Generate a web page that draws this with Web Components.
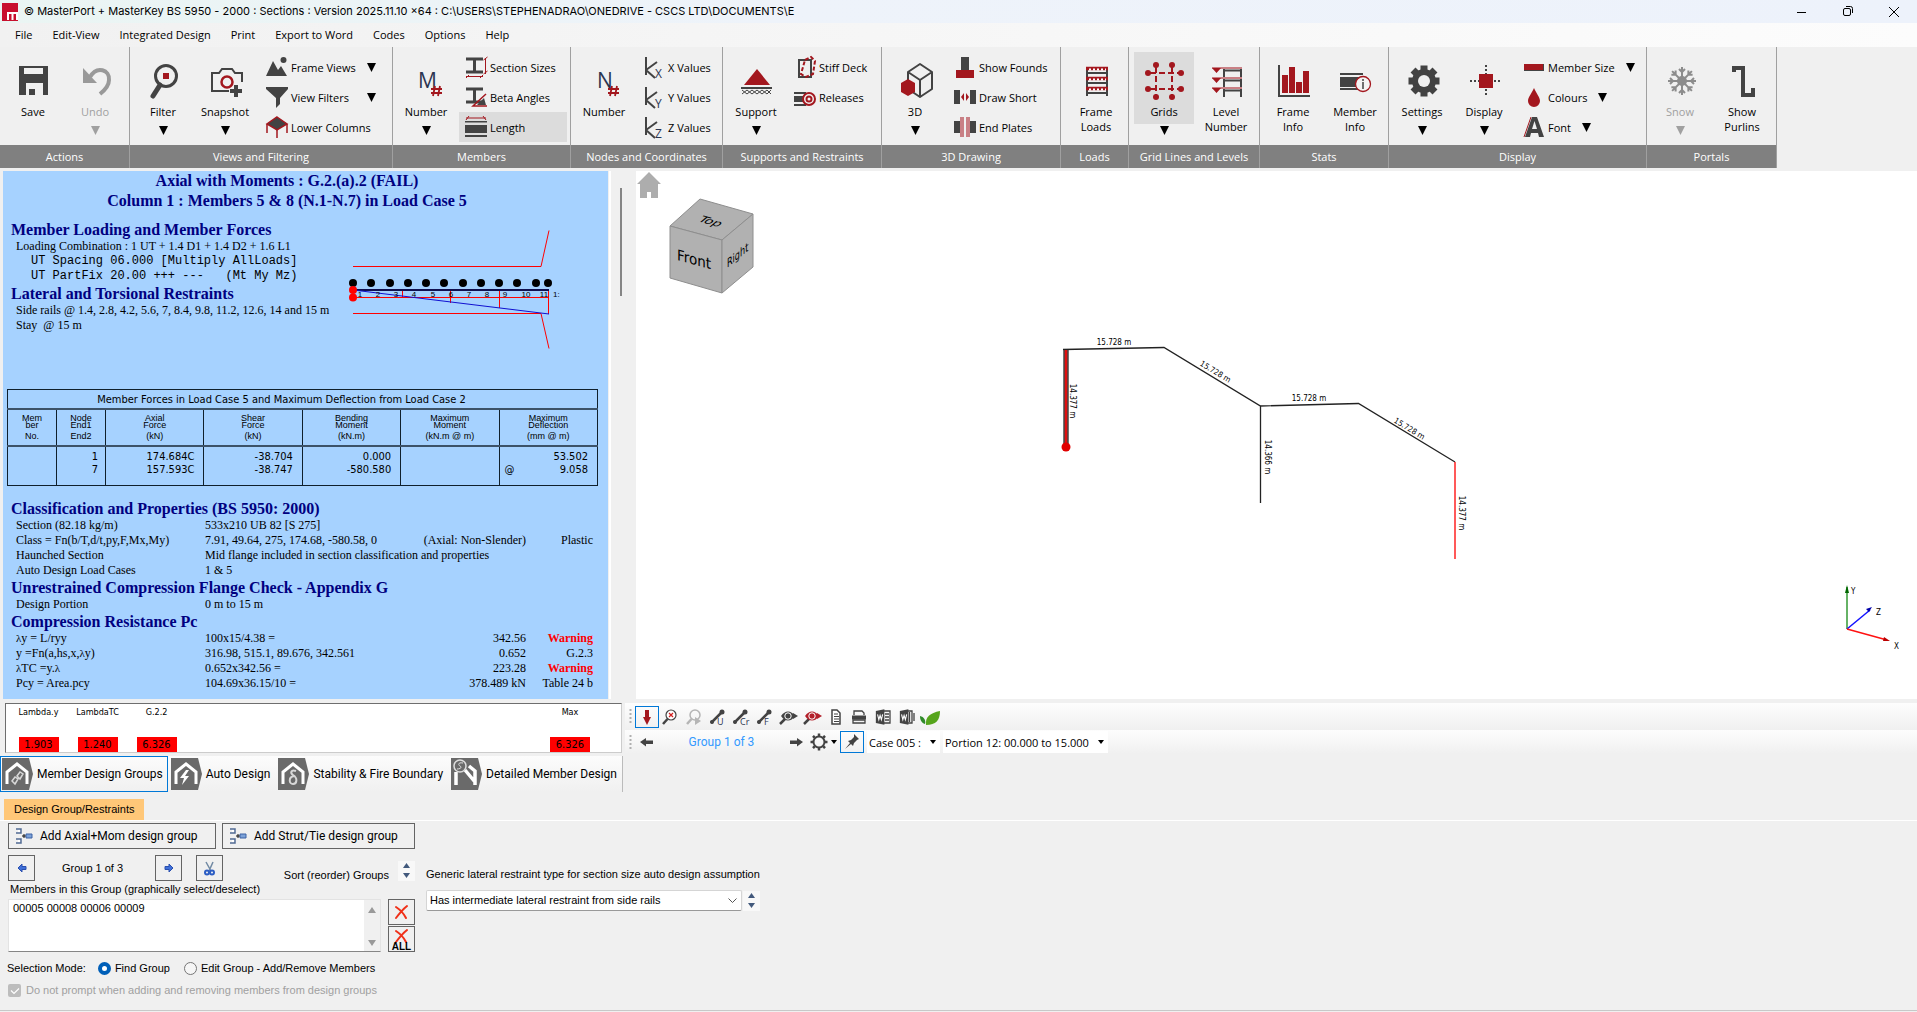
<!DOCTYPE html>
<html lang="en">
<head>
<meta charset="utf-8">
<title>MasterPort + MasterKey BS 5950</title>
<style>
  html, body { margin: 0; }
  body { font: 11px/15px "Open Sans", "Noto Sans", sans-serif; color: #000; background: #f0f0f0; }
</style>
</head>
<body>
<mk-app></mk-app>

<script>
const D = '#434343', R = '#a3171e', P = '#c98085';
const beam = `<path d="M1 1.500h17v3h-7v10h7v3H1v-3h7v-10H1z" fill="${D}"/>`;
const axis = l => `<path d="M4 1v18M4 14L15 6M4 14l9 8" stroke="${D}" stroke-width="2" fill="none"/><text x="13" y="22" font-size="12" fill="#2b3550">${l}</text>`;
const node = l => `<path d="M3 16L13 6" stroke="${D}" stroke-width="2.500"/><circle cx="14" cy="5" r="2.500" fill="${D}"/><circle cx="4" cy="15" r="2" fill="${D}"/><text x="9" y="18" font-size="9" fill="#2b3550">${l}</text>`;
const eye = c => `<path d="M7 12l-5 5" stroke="${D}" stroke-width="2.500"/><path d="M3 9c4-6 10-6 14 0-4 6-10 6-14 0z" fill="${c}"/><circle cx="10" cy="9" r="3.200" fill="none" stroke="#fff"/><path d="M15 6l5 3-5 3z" fill="${c}"/>`;
const house = x => `<path d="M0 0h27l4 16-4 16H0z" fill="#6a6a6a"/><path d="M5 26V14l10-8 10 8v12" fill="none" stroke="#fff" stroke-width="3"/>${x}`;
const member = `<path d="M3 2h4v4H3zM3 12h4v4H3z" fill="#fff"/><path d="M1 2h5v4H1M1 12h5v4H1" fill="none" stroke="#506a92" stroke-width="1.500"/><path d="M7 9h4M9 7v4" stroke="#111"/><path d="M11 7h6v4h-6z" fill="#7da2d8" stroke="#3c62a5"/>`;
const word = `<path d="M1 3l10-2v18L1 17z" fill="${D}"/><path d="M3 7l1.500 6L6 8l1.500 5L9 7" stroke="#fff" stroke-width="1.300" fill="none"/>`;
const cross = `<path d="M1 2C4 4 9 9 11 13M12 1C7 5 4 9 1 13" stroke="#f03018" stroke-width="2" fill="none" stroke-linecap="round"/>`;
const ICONS = {
  logo: [16, 18, `<path d="M0 0h16v18H0z" fill="#c8102e"/><path d="M6 17v-7h9v7M10.500 10v7" stroke="#fff" stroke-width="2" fill="none"/>`],
  minimise: [10, 10, `<path d="M0 5.500h9" stroke="#000"/>`],
  restore: [10, 11, `<rect x=".5" y="2.500" width="7" height="7" rx="1.500" fill="none" stroke="#000"/><path d="M3 .5h4.500q2 0 2 2V7" fill="none" stroke="#000"/>`],
  close: [10, 10, `<path d="M0 0l10 10M10 0L0 10" stroke="#000"/>`],
  down: [9, 9, `<path d="M0 0h9L4.500 9z" fill="currentColor"/>`],
  caret: [6, 4, `<path d="M0 0h6L3 4z" fill="#000"/>`],
  spinup: [7, 5, `<path d="M0 5h7L3.500 0z" fill="#42597c"/>`],
  spindown: [7, 5, `<path d="M0 0h7L3.500 5z" fill="#42597c"/>`],
  scrollup: [8, 6, `<path d="M0 6h8L4 0z" fill="#999"/>`],
  scrolldown: [8, 6, `<path d="M0 0h8L4 6z" fill="#999"/>`],
  chevron: [9, 6, `<path d="M.5 .5l4 4 4-4" fill="none" stroke="#555"/>`],
  save: [32, 32, `<path fill-rule="evenodd" d="M2 1h29v29H2zM7 3v6h19V3zM9 18v12h17V18z" fill="${D}"/><path d="M12 24h6v6h-6z" fill="${D}"/>`],
  undo: [32, 32, `<path d="M4 3v15h14z" fill="#999"/><path d="M11 12C18 0 31 5 30 15c0 6-4 10-9 14" stroke="#999" stroke-width="4" fill="none"/>`],
  filter: [32, 32, `<circle cx="19" cy="11" r="10.500" fill="none" stroke="${D}" stroke-width="3"/><path d="M13 20L6 31" stroke="${D}" stroke-width="5" stroke-linecap="round"/><path d="M16 8h6v6h-6z" fill="${R}"/>`],
  snapshot: [32, 32, `<path d="M20 26H3V8h7l3-4h10l3 4h7v9" fill="none" stroke="${D}" stroke-width="2"/><circle cx="18" cy="17" r="5.500" fill="none" stroke="${R}" stroke-width="2.500"/><path d="M27 20v12M21 26h12" stroke="${D}" stroke-width="4"/>`],
  views: [22, 22, `<path d="M0 20L7 5l5 9 3-4 6 10z" fill="${D}"/><circle cx="17.500" cy="4" r="3" fill="${D}"/>`],
  funnel: [22, 22, `<path d="M0 1h22v2l-8 9v6l-4 4V12L0 3z" fill="${D}"/>`],
  lower: [22, 22, `<path d="M11 1l10 7-10 6L1 8z" fill="${D}" stroke="${R}" stroke-width="1.500"/><path d="M1 8v9M21 8v9M11 14v8" stroke="${R}" stroke-width="1.500"/>`],
  mnum: [32, 32, `<text x="8" y="23" font-size="21" fill="#2b3550">M</text><path d="M24 21l-2 10M29 21l-2 10M20 24h11M20 28h11" transform="translate(1 0)" stroke="${R}" stroke-width="1.800"/>`],
  nnum: [32, 32, `<text x="9" y="23" font-size="21" fill="#2b3550">N</text><path d="M24 21l-2 10M29 21l-2 10M20 24h11M20 28h11" stroke="${R}" stroke-width="1.800"/>`],
  section: [22, 22, beam + `<path d="M20.500 2v16M18.500 4l4-3M18.500 18l4-3M1 20.500h17M1 22l3-3M15 22l3-3" stroke="${R}"/>`],
  beta: [22, 22, beam + `<path d="M12 19h9l-2-7z" fill="${D}"/><path d="M21 8L8 20h14" stroke="${R}" fill="none" stroke-width="1.500"/>`],
  length: [22, 22, `<path d="M0 5h22v1.500H0zM0 9h22v8H0zM0 19h22v2H0z" fill="${D}"/><path d="M1 2h20M1 4l3-4M18 0l3 4" stroke="${R}"/>`],
  axx: [23, 22, axis('X')], axy: [23, 22, axis('Y')], axz: [23, 22, axis('Z')],
  support: [32, 32, `<path d="M17 4l13 16H4z" fill="${R}"/><path d="M1 22h31v2H1z" fill="${D}"/><path d="M2 25l5 4 5-4 5 4 5-4 5 4 4-4M2 29l5-4 5 4 5-4 5 4 5-4 4 4" fill="none" stroke="${D}"/>`],
  deck: [22, 22, `<rect x="5" y="4" width="12" height="17" fill="none" stroke="${D}" stroke-width="2"/><path d="M11 4l6-3 4 4-2 13-7 3-5-3z" fill="none" stroke="${R}" stroke-width="2" stroke-dasharray="4 2"/>`],
  release: [22, 22, `<path d="M0 6h12v2H0zM0 10h12v6H0zM0 18h12v2H0z" fill="${D}"/><circle cx="15" cy="13" r="6" fill="#f0f0f0" stroke="${R}" stroke-width="2"/><circle cx="15" cy="13" r="2.500" fill="none" stroke="${R}" stroke-width="2"/>`],
  cube3d: [32, 32, `<path d="M21-1l12 8v17L21 32 9 24V7zM9 7l12 8 12-8M21 15v16" fill="none" stroke="${D}" stroke-width="2" stroke-linejoin="round"/><path d="M9 14l7 4v9l-7 4-7-4v-9z" fill="${R}"/>`],
  founds: [22, 22, `<path d="M7 1h8v13H7z" fill="${D}"/><path d="M2 14h18v8H2z" fill="${R}"/>`],
  short: [22, 22, `<path d="M0 4h6v14H0zM16 4h6v14h-6z" fill="${D}"/><path d="M7 11l3-4v8zM15 11l-3-4v8z" fill="${R}"/>`],
  plates: [22, 22, `<path d="M0 5h7v12H0zM15 5h7v12h-7z" fill="${D}"/><path d="M6 1h4v20H6zM12 1h4v20h-4z" fill="${P}"/>`],
  floads: [32, 32, `<path d="M7 5v26M27 5v26M7 8h20M7 18h20M7 28h20" stroke="${D}" stroke-width="2"/><path d="M6 3.500h22M6 13.500h22M6 23.500h22" stroke="${R}" stroke-width="3.500"/><path d="M9 4.500h17M9 14.500h17M9 24.500h17" stroke="#fff" stroke-width="2" stroke-dasharray="2 2"/>`],
  grids: [32, 32, `<g fill="${R}"><circle cx="8" cy="0" r="3"/><circle cx="24" cy="0" r="3"/><circle cx="8" cy="32" r="3"/><circle cx="24" cy="32" r="3"/><circle cx="0" cy="8" r="3"/><circle cx="33" cy="8" r="3"/><circle cx="0" cy="24" r="3"/><circle cx="33" cy="24" r="3"/></g><path d="M8 0v32M24 0v32M0 8h33M0 24h33" stroke="${R}" stroke-width="2" stroke-dasharray="6 3" stroke-dashoffset="-2"/>`],
  level: [32, 32, `<path d="M14 4v28M31 4v28M14 5.500h17M14 15.500h17M14 25.500h17" stroke="${D}" stroke-width="2"/><path d="M2 3h30M2 13h30M2 23h30" stroke="${P}" stroke-width="2"/><path d="M2 3h9L6.500 8zM2 13h9l-4.500 5zM2 23h9l-4.500 5z" fill="${R}"/>`],
  finfo: [32, 32, `<path d="M2 0v31h31" fill="none" stroke="${D}" stroke-width="2"/><path d="M5 10h6v18H5zM12 2h6v26h-6zM19 17h6v11h-6zM26 6h6v22h-6z" fill="${R}"/>`],
  minfo: [32, 32, `<path d="M1 8h23v2H1zM1 12h19v10H1zM1 23h18v2H1z" fill="${D}"/><circle cx="24" cy="19" r="7.500" fill="#f4f4f4" stroke="${R}" stroke-width="1.300"/><path d="M24 17v7M24 14v2" stroke="${D}" stroke-width="1.500"/>`],
  gear: [32, 32, `<g transform="translate(18 16)"><g fill="${D}"><circle r="12"/>${[0,45,90,135].map(a => `<path d="M-3.500-15.500h7v31h-7z" transform="rotate(${a})"/>`).join('')}</g><circle r="6" fill="#f0f0f0"/></g>`],
  display: [32, 32, `<path d="M18 0v32M2 16h32" stroke="${D}" stroke-width="2" stroke-dasharray="2 2"/><path d="M11 9h14v14H11z" fill="${R}"/>`],
  msize: [22, 22, `<path d="M1 8h20v7H1z" fill="${D}"/><path d="M1 8h19v6H1z" fill="${R}"/>`],
  drop: [22, 22, `<path d="M11 2c2 5 6 9 6 13a6 6 0 0 1-12 0c0-4 4-8 6-13z" fill="${R}"/>`],
  font: [22, 22, `<path d="M1 21L8 1" stroke="${R}"/><path fill-rule="evenodd" d="M2 21L9 1h5l7 20h-5l-1-4H8l-1 4zM9 13h5l-2.500-8z" fill="${D}"/>`],
  snow: [32, 32, `<g transform="translate(18 16)" stroke="#8c8c8c" stroke-width="2" fill="none">${[0,45,90,135,180,225,270,315].map(a => `<path d="M0 0v-14M-3-12l3 3 3-3" transform="rotate(${a})"/>`).join('')}<circle r="4" fill="#8c8c8c"/></g>`],
  purlin: [32, 32, `<path d="M8 7V3h9v27h10v-7" fill="none" stroke="${D}" stroke-width="4"/>`],
  home: [24, 26, `<path d="M12 0l12 12h-3v14h-7v-6h-4v6H3V12H0z" fill="#adadad"/>`],
  tdown: [20, 20, `<path d="M8 3h4v7h2l-4 8-4-8h2z" fill="${R}"/>`],
  zoomx: [20, 20, `<circle cx="11" cy="8" r="5" fill="#fff" stroke="${D}" stroke-width="1.200"/><path d="M7.500 12L3 17" stroke="${D}" stroke-width="2.500"/><path d="M9 6l4 4M13 6l-4 4" stroke="#d02020" stroke-width="1.200"/>`],
  zoomp: [20, 20, `<circle cx="11" cy="8" r="5" fill="none" stroke="#b5b5b5" stroke-width="1.500"/><path d="M7.500 12L3 17" stroke="#b5b5b5" stroke-width="2.500"/><path d="M11 10l6 4-6 4z" fill="#b5b5b5"/>`],
  nodeu: [20, 20, node('U')], nodeg: [20, 20, node('Cr')], nodef: [20, 20, node('F')],
  eyed: [20, 20, eye(D)], eyer: [20, 20, eye('#b3202a')],
  doc: [20, 20, `<path d="M6 3h5l3 3v11H6z" fill="#fff" stroke="${D}" stroke-width="1.500"/><path d="M8 7h4M8 9.500h5M8 12h5M8 14.500h5" stroke="${D}"/>`],
  print: [20, 20, `<path d="M5 8V4h8l2 2v2M4 16h12v-3H4z" fill="none" stroke="${D}" stroke-width="1.300"/><path d="M3 8.500h14v4H3z" fill="${D}"/>`],
  word1: [20, 20, `<path d="M11 4h6v12h-6M12 7h4M12 10h4M12 13h4" fill="none" stroke="${D}" stroke-width="1.300"/><g transform="translate(2 1.500) scale(.85)">${word}</g>`],
  word2: [20, 20, `<path d="M11 4h4v12h-4M12.500 5v10M17 6v8" fill="none" stroke="${D}" stroke-width="1.300"/><g transform="translate(2 1.500) scale(.85)">${word}</g>`],
  leaf: [20, 20, `<path d="M6 18C5 10 10 6 20 4c0 9-4 14-14 14z" fill="#56a51c"/><path d="M5 17C1 16 0 12 0 9c4 1 6 4 5 8z" fill="#2f8a2a"/>`],
  back: [20, 20, `<path d="M3 10l6-4v2.500h7v3.500H9v2.500z" fill="${D}"/>`],
  fwd: [20, 20, `<path d="M17 10l-6-4v2.500H4v3.500h7v2.500z" fill="${D}"/>`],
  cog: [20, 20, `<g transform="translate(10 10)"><circle r="5.500" fill="none" stroke="${D}" stroke-width="2"/>${[0,45,90,135,180,225,270,315].map(a => `<path d="M0-6v-2.500" stroke="${D}" stroke-width="2.500" transform="rotate(${a})"/>`).join('')}</g>`],
  pin: [20, 20, `<path d="M12 2l5 5-2 1-3 3-1 3-2-2-6 5 5-6-2-2 3-1 3-3z" fill="${D}"/>`],
  grip: [3, 15, `<path d="M1.500 0v15" stroke="#b0b0b0" stroke-width="2" stroke-dasharray="2 2"/>`],
  hlink: [32, 32, house(`<path d="M10 23l3-4 3 2-3 5zM15 18l3-4 3 2-3 5z" fill="none" stroke="#d8d8d8" stroke-width="1.500"/>`)],
  hbolt: [32, 32, house(`<path d="M15 12l-6 8h4l-2 7 7-9h-4l4-6z" fill="#fff"/>`)],
  hdelta: [32, 32, house(`<path d="M18 13c-5-2-6 2-3 4 5 3 4 9 0 9s-5-7 1-8" fill="none" stroke="#d8d8d8" stroke-width="2"/>`)],
  hzoom: [32, 32, `<path d="M0 0h27l4 16-4 16H0z" fill="#6a6a6a"/><path d="M5 27V14M24 27V13l-6-5M14 12l10 12" fill="none" stroke="#fff" stroke-width="3.500"/><circle cx="9" cy="8" r="6" fill="#6a6a6a" stroke="#ddd" stroke-width="1.500"/><path d="M12 5c-5-1-5 2-3 3s1 3-3 3" fill="none" stroke="#ddd"/>`],
  addg: [18, 18, member],
  bleft: [10, 10, `<path d="M1 5l4-4v2.500h4v3H5V9z" fill="#3f6fd8" stroke="#2a4fae"/>`],
  bright: [10, 10, `<path d="M9 5L5 1v2.500H1v3h4V9z" fill="#3f6fd8" stroke="#2a4fae"/>`],
  cut: [11, 15, `<path d="M2 1l5 9M9 1L5 10" stroke="#7089a3" stroke-width="1.500"/><circle cx="3" cy="11.500" r="2" fill="none" stroke="#2d5ec4" stroke-width="2"/><circle cx="8" cy="11.500" r="2" fill="none" stroke="#2d5ec4" stroke-width="2"/>`],
  del: [13, 14, cross]
};

const define = (name, render) => customElements.define(name, class extends HTMLElement {
  connectedCallback() {
    if (this.shadowRoot) return;
    this.attachShadow({ mode: 'open' }).innerHTML = render(this);
  }
});
const at = (el, n) => el.getAttribute(n) || '';

define('mk-icon', el => {
  const [w, h, body] = ICONS[at(el, 'name')];
  return `<style>:host{display:block;flex:none;width:${w}px;height:${h}px}svg{display:block;overflow:visible}</style>
  <svg width="${w}" height="${h}" viewBox="0 0 ${w} ${h}" aria-hidden="true">${body}</svg>`;
});

define('title-bar', () => `<style>
  :host{display:flex;align-items:center;height:23px;padding-left:2px;background:linear-gradient(90deg,#eaf5f3,#eef3fa 40%,#edf2fb)}
  span{font:11px/15px Inter,sans-serif;margin-left:6px;flex:1;white-space:nowrap}
  button{all:unset;width:46px;height:20px;display:flex;align-items:center;justify-content:center}
  </style><mk-icon name="logo"></mk-icon>
  <span>© MasterPort + MasterKey BS 5950 - 2000 : Sections : Version 2025.11.10 x64 : C:\\USERS\\STEPHENADRAO\\ONEDRIVE - CSCS LTD\\DOCUMENTS\\E</span>
  <button aria-label="Minimise"><mk-icon name="minimise"></mk-icon></button><button aria-label="Restore"><mk-icon name="restore"></mk-icon></button><button aria-label="Close"><mk-icon name="close"></mk-icon></button>`);

define('menu-bar', () => `<style>
  :host{display:flex;align-items:center;gap:20px;box-sizing:border-box;height:24px;padding:0 0 2px 15px;background:linear-gradient(90deg,#f1f1f1,#fcfcfc)}
  button{all:unset;white-space:nowrap}
  </style>${['File','Edit-View','Integrated Design','Print','Export to Word','Codes','Options','Help'].map(t => `<button>${t}</button>`).join('')}`);

define('ribbon-group', el => `<style>
  :host{display:flex;flex-direction:column;flex:none;box-sizing:border-box;border-right:1px solid #a0a0a0;height:121px}
  .body{display:flex;flex:1;padding-left:var(--inset,2px)}
  footer{height:23px;line-height:23px;background:#808080;color:#fff;text-align:center}
  </style><div class="body"><slot></slot></div><footer>${at(el, 'caption')}</footer>`);

define('ribbon-button', el => `<style>
  :host{display:flex;flex-direction:column;align-items:center;width:62px;padding-top:5px;color:${el.hasAttribute('off') ? '#a0a0a0' : '#000'}}
  button{all:unset;box-sizing:border-box;display:flex;flex-direction:column;align-items:center;width:60px;min-height:72px;padding-top:13px;text-align:center;${el.hasAttribute('on') ? 'background:#dcdcdc' : ''}}
  span{margin-top:7px}
  .arrow{margin-top:2px}
  </style><button><mk-icon name="${at(el, 'icon')}"></mk-icon><span>${at(el, 'label').replace('|', '<br>')}</span></button>
  ${el.hasAttribute('menu') ? '<mk-icon class="arrow" name="down"></mk-icon>' : ''}`);

define('ribbon-item', el => `<style>
  :host{display:block}
  button{all:unset;box-sizing:border-box;display:flex;align-items:center;gap:3px;width:100%;height:30px;min-width:108px;padding:0 6px;white-space:nowrap;${el.hasAttribute('on') ? 'background:#dcdcdc' : ''}}
  .arrow{margin-left:var(--arrow,8px)}
  </style><button><mk-icon name="${at(el, 'icon')}"></mk-icon><span>${at(el, 'label')}</span>${el.hasAttribute('menu') ? '<mk-icon class="arrow" name="down"></mk-icon>' : ''}</button>`);

define('ribbon-list', () => `<style>:host{display:flex;flex-direction:column;padding-top:5px;margin-left:2px}:host([even]){--arrow:auto;width:122px;margin-left:4px}</style><slot></slot>`);

define('ribbon-bar', () => {
  const big = (icon, label, extra = '') => `<ribbon-button icon="${icon}" label="${label}" ${extra}></ribbon-button>`;
  const list = (rows, attr = '') => `<ribbon-list ${attr}>${rows.map(([i, l, x = '']) => `<ribbon-item icon="${i}" label="${l}" ${x}></ribbon-item>`).join('')}</ribbon-list>`;
  const group = (caption, w, body, inset = 2) => `<ribbon-group caption="${caption}" style="width:${w}px;--inset:${inset}px">${body}</ribbon-group>`;
  return `<style>:host{display:flex;height:121px}</style>` +
    group('Actions', 130, big('save', 'Save') + big('undo', 'Undo', 'menu off')) +
    group('Views and Filtering', 263, big('filter', 'Filter', 'menu') + big('snapshot', 'Snapshot', 'menu') + list([['views', 'Frame Views', 'menu'], ['funnel', 'View Filters', 'menu'], ['lower', 'Lower Columns']], 'even')) +
    group('Members', 178, big('mnum', 'Number', 'menu') + list([['section', 'Section Sizes'], ['beta', 'Beta Angles'], ['length', 'Length', 'on']])) +
    group('Nodes and Coordinates', 152, big('nnum', 'Number') + list([['axx', 'X Values'], ['axy', 'Y Values'], ['axz', 'Z Values']]), 3) +
    group('Supports and Restraints', 159, big('support', 'Support', 'menu') + list([['deck', 'Stiff Deck'], ['release', 'Releases']]), 3) +
    group('3D Drawing', 179, big('cube3d', '3D', 'menu') + list([['founds', 'Show Founds'], ['short', 'Draw Short'], ['plates', 'End Plates']])) +
    group('Loads', 68, big('floads', 'Frame|Loads'), 4) +
    group('Grid Lines and Levels', 131, big('grids', 'Grids', 'on menu') + big('level', 'Level|Number'), 4) +
    group('Stats', 129, big('finfo', 'Frame|Info') + big('minfo', 'Member|Info')) +
    group('Display', 258, big('gear', 'Settings', 'menu') + big('display', 'Display', 'menu') + list([['msize', 'Member Size', 'menu'], ['drop', 'Colours', 'menu'], ['font', 'Font', 'menu']])) +
    group('Portals', 130, big('snow', 'Snow', 'off menu') + big('purlin', 'Show|Purlins'));
});

define('moment-figure', () => {
  const dots = [353, 371, 390, 408, 426, 444, 463, 481, 499, 517, 536, 548].map(x => `<circle cx="${x}" cy="283" r="4"/>`).join('');
  const nums = [360, 378, 396, 414, 433, 451, 469, 487, 505, 526, 544].map((x, i) => `<text x="${x}" y="297" text-anchor="middle">${i + 1}</text>`).join('');
  return `<style>:host{display:block}svg{display:block;overflow:visible;font:8px "Liberation Sans",sans-serif}</style>
  <svg width="215" height="130" viewBox="345 225 215 130">
  <g fill="none" stroke="#f00"><path d="M353 266.500h188l8-36M353 313.500h188l8 35M353 297.500h196M402.500 290v8M450.500 290v13M499.500 290v18M548.500 290v24"/></g>
  ${dots}<path d="M353 290h196" stroke="#101050" stroke-width="2"/><path d="M353 290l196 24" stroke="#1010d0" fill="none"/>
  ${nums}<text x="553" y="297">1:</text><circle cx="353" cy="290" r="4" fill="#f00"/><circle cx="353" cy="297.500" r="4" fill="#f00"/></svg>`;
});

define('forces-table', () => {
  const head = [['Mem', 'ber', 'No.'], ['Node', 'End1', 'End2'], ['Axial', 'Force', '(kN)'], ['Shear', 'Force', '(kN)'], ['Bending', 'Moment', '(kN.m)'], ['Maximum', 'Moment', '(kN.m @ m)'], ['Maximum', 'Deflection', '(mm @ m)']];
  return `<style>
  :host{display:block}
  table{border-collapse:collapse;table-layout:fixed;width:100%;border:1px solid #10202c;font:11px/13px "DejaVu Sans Condensed",sans-serif}
  th,td{padding:0;font-weight:400;border:1px solid #10202c}
  .t{height:18px;border-bottom:2px solid #3c5268;padding-right:42px}
  .h th{height:35px;font:9px/7px "Liberation Sans",sans-serif;border-bottom:2px solid #3c5268}
  .h i{display:block;font-style:normal;margin-top:4px}
  td{height:33px;padding:3px 9px 2px 5px;text-align:right;vertical-align:top}
  td.n{padding-right:7px}
  td div{display:flex;justify-content:space-between}
  </style><table><colgroup><col style="width:49px"><col style="width:49px"><col><col><col><col><col></colgroup>
  <tr><th class="t" colspan="7">Member Forces in Load Case 5 and Maximum Deflection from Load Case 2</th></tr>
  <tr class="h">${head.map(h => `<th>${h[0]}<br>${h[1]}<i>${h[2]}</i></th>`).join('')}</tr>
  <tr><td></td><td class="n">1<br>7</td><td>174.684C<br>157.593C</td><td>-38.704<br>-38.747</td><td>0.000<br>-580.580</td><td></td><td>53.502<div><span>@</span><span>9.058</span></div></td></tr></table>`;
});

define('design-report', () => {
  const row = (a, b = '', c = '', d = '', w = '') => `<div class="row"><span>${a}</span><span>${b}</span><span class="v">${c}</span><span class="v ${w}">${d}</span></div>`;
  return `<style>
  :host{display:flex;flex-direction:column;box-sizing:border-box;background:#a6d2ff;color:#000;font:12px/15px "Liberation Serif",serif;padding:0 10px 8px 4px;white-space:nowrap}
  h1,h2{font-weight:700;font-size:16px;color:#000080;margin:0}
  h1{line-height:20px;text-align:center;padding-right:31px}
  h2{line-height:19px;padding-left:4px}
  p{margin:0;padding-left:9px}
  pre{margin:0;font:12px/15px "Liberation Mono",monospace;padding-left:24px}
  .top{display:flex;justify-content:space-between;align-items:flex-start;padding:9px 38px 0 0;height:169px}
  .top moment-figure{padding-top:5px}
  .row{display:grid;grid-template-columns:189px 1fr auto 67px;padding:0 5px 0 9px}
  .v{text-align:right}.warn{color:#f00;font-weight:700}
  forces-table{margin-bottom:13px}
  small{font-size:11px}
  </style>
  <h1>Axial with Moments : G.2.(a).2 (FAIL)</h1><h1>Column 1 : Members 5 &amp; 8 (N.1-N.7) in Load Case 5</h1>
  <div class="top"><div><h2>Member Loading and Member Forces</h2>
  <p>Loading Combination : 1 UT + 1.4 D1 + 1.4 D2 + 1.6 L1</p>
  <pre>UT Spacing 06.000 [Multiply AllLoads]
UT PartFix 20.00 +++ ---   (Mt My Mz)</pre>
  <h2>Lateral and Torsional Restraints</h2><p>Side rails @ 1.4, 2.8, 4.2, 5.6, 7, 8.4, 9.8, 11.2, 12.6, 14 and 15 m</p><p>Stay &nbsp;@ 15 m</p></div>
  <moment-figure></moment-figure></div>
  <forces-table></forces-table>
  <h2>Classification and Properties (BS 5950: 2000)</h2>` +
  row('Section (82.18 kg/m)', '533x210 UB 82 [S 275]') +
  row('Class = Fn(b/T,d/t,py,F,Mx,My)', '7.91, 49.64, 275, 174.68, -580.58, 0', '(Axial: Non-Slender)', 'Plastic') +
  row('Haunched Section', 'Mid flange included in section classification and properties') +
  row('Auto Design Load Cases', '1 &amp; 5') +
  `<h2>Unrestrained Compression Flange Check - Appendix G</h2>` + row('Design Portion', '0 m to 15 m') +
  `<h2>Compression Resistance Pc</h2>` +
  row('<small>λ</small>y = L/ryy', '100x15/4.38 =', '342.56', 'Warning', 'warn') +
  row('y =Fn(a,hs,x,<small>λ</small>y)', '316.98, 515.1, 89.676, 342.561', '0.652', 'G.2.3') +
  row('<small>λ</small>TC =y.<small>λ</small>', '0.652x342.56 =', '223.28', 'Warning', 'warn') +
  row('Pcy = Area.pcy', '104.69x36.15/10 =', '378.489 kN', 'Table 24 b');
});

define('frame-viewport', () => `<style>
  :host{display:block;position:relative;background:#fff;overflow:hidden}
  mk-icon{position:absolute;left:1px;top:1px}
  svg{position:absolute;overflow:visible;font-family:"DejaVu Sans Condensed",sans-serif}
  .cube{left:33px;top:27px}.frame{left:420px;top:160px}.axes{right:14px;bottom:44px}
  </style>
  <mk-icon name="home"></mk-icon>
  <svg class="cube" width="86" height="96" viewBox="669 198 86 96"><g fill="#b1b1b1" stroke="#8e8e8e" stroke-linejoin="round"><path d="M670 226l30-27 53 15-31 26z"/><path d="M670 226l52 14v53l-52-15z"/><path d="M722 240l31-26v53l-31 26z"/></g>
  <text transform="matrix(.96 .27 -.6 .5 697 221)" font-size="15">Top</text>
  <text transform="matrix(1 .27 0 1 677 260)" font-size="15">Front</text>
  <text transform="matrix(.75 -.62 0 1 727 268)" font-size="12">Right</text></svg>
  <svg class="frame" width="420" height="240" viewBox="1056 331 420 240" font-size="8">
  <path d="M1063 349.500L1164 347.500L1260.500 406l98-2.500L1455 462M1260.500 406v97" fill="none" stroke="#222" stroke-width="1.300"/>
  <path d="M1455 462v97" stroke="#f22" stroke-width="1.500"/>
  <path d="M1068.500 384h7v34h-7z" fill="#fff"/>
  <path d="M1066 350v94" stroke="#444" stroke-width="5.500"/><path d="M1066 350v94" stroke="#e01010" stroke-width="2.500"/>
  <circle cx="1066" cy="447" r="4.500" fill="#e00000"/>
  <g text-anchor="middle"><text x="1114" y="345">15.728 m</text><text x="1309" y="401">15.728 m</text>
  <text transform="translate(1214 374) rotate(31)">15.728 m</text><text transform="translate(1408 431) rotate(31)">15.728 m</text>
  <text transform="translate(1070 401) rotate(90)">14.377 m</text><text transform="translate(1265 457) rotate(90)">14.366 m</text><text transform="translate(1459 513) rotate(90)">14.377 m</text></g></svg>
  <svg class="axes" width="56" height="70" viewBox="1847 586 56 70" font-size="8">
  <path d="M1847 630v-42" stroke="#393" stroke-width="1.500"/><path d="M1847 586l2 8h-4z" fill="#060"/>
  <path d="M1847 630l23-19" stroke="#11f" stroke-width="1.500"/><path d="M1872 608l-3 5-3-3z" fill="#00a"/>
  <path d="M1847 630l40 11" stroke="#f11" stroke-width="1.500"/><path d="M1890 642l-7 0 1-4z" fill="#b00"/>
  <text x="1851" y="595">Y</text><text x="1876" y="616">Z</text><text x="1894" y="650">X</text></svg>`);

define('summary-box', () => `<style>
  :host{display:flex;box-sizing:border-box;height:50px;margin:0 3px 0 5px;padding:1px 31px 0 3px;background:#fff;border:1px solid #6e6e6e;border-right-color:#ccc;border-bottom-color:#ccc;font:9px/12px "DejaVu Sans Condensed",sans-serif}
  div{width:59px;display:flex;flex-direction:column;align-items:center;justify-content:space-between}
  div:last-child{margin-left:auto;width:40px}
  b{font-weight:400;width:40px;background:#f00;text-align:center;font-size:11px;line-height:15px}
  span{padding-top:1px}
  </style>${[['Lambda.y', '1.903'], ['LambdaTC', '1.240'], ['G.2.2', '6.326'], ['Max', '6.326']].map(([a, b]) => `<div><span>${a}</span><b>${b}</b></div>`).join('')}`);

define('design-tabs', () => `<style>
  :host{display:flex;height:36px;margin-right:2px;background:linear-gradient(#fcfcfc,#f0f0f0);border-right:1px solid #bbb}
  button{all:unset;box-sizing:border-box;display:flex;align-items:center;gap:3px;height:36px;padding:0 4px 0 1px;border:1px solid transparent;white-space:nowrap}
  button:nth-of-type(n+2){margin-left:1px}
  .on{border-color:#0078d7}
  button span{font:12px/15px Roboto,sans-serif}
  </style>${[['hlink', 'Member Design Groups'], ['hbolt', 'Auto Design'], ['hdelta', 'Stability &amp; Fire Boundary'], ['hzoom', 'Detailed Member Design']].map(([i, t], n) => `<button class="${n ? '' : 'on'}"><mk-icon name="${i}"></mk-icon><span>${t}</span></button>`).join('')}`);

define('view-toolbars', () => `<style>
  :host{display:block}
  .bar{display:flex;align-items:center;height:27px;padding-left:4px;background:linear-gradient(#fdfdfd,#f0f0f0)}
  .bar+.bar{height:24px}
  mk-icon[name=grip]{margin-right:3px}
  button{all:unset;box-sizing:border-box;display:flex;align-items:center;justify-content:center;width:24px;height:22px;border:1px solid transparent}
  button.on{border-color:#0078d7}
  button.opt{width:22px}
  .arrow{margin:0 3px 0 1px}
  .tools{display:flex;width:307px}
  .tools button{flex:1}
  .grp{width:125px;text-align:center;color:#3399ff;font:12px/15px Roboto,sans-serif}
  .pick{display:grid;align-items:center;justify-items:end;background:#fff;height:22px;margin-left:3px}
  .pick>*{grid-area:1/1}
  .pick mk-icon{margin-right:4px;pointer-events:none}
  select{appearance:none;border:0;background:none;width:100%;height:22px;padding:0 18px 0 2px;font:inherit;color:#000}
  </style>
  <div class="bar"><mk-icon name="grip"></mk-icon><div class="tools">${['tdown', 'zoomx', 'zoomp', 'nodeu', 'nodeg', 'nodef', 'eyed', 'eyer', 'doc', 'print', 'word1', 'word2', 'leaf'].map((n, i) => `<button aria-label="${n}" class="${i ? '' : 'on'}"><mk-icon name="${n}"></mk-icon></button>`).join('')}</div></div>
  <div class="bar"><mk-icon name="grip"></mk-icon><button aria-label="Previous group"><mk-icon name="back"></mk-icon></button><span class="grp">Group 1 of 3</span><button aria-label="Next group"><mk-icon name="fwd"></mk-icon></button><button class="opt" aria-label="Options"><mk-icon name="cog"></mk-icon></button><mk-icon name="caret" class="arrow"></mk-icon><button class="on" aria-label="Pin"><mk-icon name="pin"></mk-icon></button>
  <div class="pick" style="width:73px"><select aria-label="Load case"><option>Case 005 :</option></select><mk-icon name="caret"></mk-icon></div>
  <div class="pick" style="width:165px"><select aria-label="Portion"><option>Portion 12: 00.000 to 15.000</option></select><mk-icon name="caret"></mk-icon></div></div>`);

define('spin-box', () => `<style>:host{display:flex;flex-direction:column;width:17px}
  button{all:unset;display:flex;justify-content:center;align-items:center;height:10px;background:#f8f8f8}</style>
  <button aria-label="Up"><mk-icon name="spinup"></mk-icon></button><button aria-label="Down"><mk-icon name="spindown"></mk-icon></button>`);

define('group-panel', () => `<style>
  :host{display:flex;flex-direction:column;flex:1;font:11px/15px "Liberation Sans",sans-serif;white-space:nowrap}
  .tab{height:21px;margin:7px 0 0 4px;padding:0 10px;background:#ffc778;display:flex;align-items:center;align-self:flex-start}
  .page{border-top:1px solid #fff;padding:2px 8px 0;flex:1}
  .row{display:flex;align-items:center}
  button{all:unset;box-sizing:border-box;display:flex;align-items:center;justify-content:center;border:1px solid #646464;height:26px;width:27px;flex:none}
  .wide{width:208px;justify-content:flex-start;gap:7px;padding-left:6px;font:12px/15px Roboto,sans-serif}
  .wide+.wide{width:193px;margin-left:6px}
  .cols{display:flex;gap:11px;margin-top:6px}
  .left{width:407px}
  .nav{height:26px}
  .nav>span{width:120px;box-sizing:border-box;padding-right:5px;text-align:center}
  .nav .cut{margin-left:14px}
  .nav label{margin:14px 9px 0 auto;width:auto}
  .nav spin-box{margin-top:5px}
  .cap{display:block;padding:1px 0 2px 2px}
  .edit{display:flex;gap:7px}
  .box{display:flex;flex:1;background:#fff;border:1px solid #e3e3e3;border-bottom-color:#868686;height:51px}
  textarea{flex:1;border:0;outline:0;resize:none;padding:1px 4px;background:none;font:inherit;color:#000;overflow:hidden}
  .bar{width:16px;background:#f0f0f0;display:flex;flex-direction:column;justify-content:space-between;align-items:center;padding:7px 0 5px;box-sizing:border-box}
  .stack{display:flex;flex-direction:column;gap:1px}
  .all{display:grid;place-items:center}
  .all>*{grid-area:1/1}.all b{align-self:end;font-size:10px;line-height:9px}
  .all mk-icon{align-self:start;padding-top:2px}
  .mode{margin:9px 0 0 -1px;height:15px}
  input{margin:0}
  input[type=radio]{appearance:none;width:13px;height:13px;border:1px solid #767676;border-radius:50%;background:#f6f6f6;margin-right:4px;flex:none}
  input[type=radio]:checked{border:4px solid #005fb8;background:#fff}
  .mode>input:first-of-type{margin-left:12px}.mode>input:last-of-type{margin-left:14px}
  .ask{margin-top:7px;color:#a0a0a0;height:15px}
  .tick{display:grid;margin-right:5px}.tick>*{grid-area:1/1}
  input[type=checkbox]{appearance:none;width:13px;height:13px;border-radius:2px;background:#bdbdbd}
  .right{padding-top:12px}
  .pick{display:grid;align-items:center;justify-items:end;width:316px}
  .pick>*{grid-area:1/1}.pick mk-icon{margin-right:5px;pointer-events:none}
  select{appearance:none;box-sizing:border-box;width:100%;height:21px;border:1px solid #d5d5d5;border-bottom-color:#999;border-radius:2px;background:#fff;padding:0 20px 0 3px;font:inherit;color:#000}
  .right .row{margin-top:8px;gap:1px}
  footer{border-top:1px solid #c8c8c8;height:1px}
  </style>
  <div class="tab">Design Group/Restraints</div>
  <div class="page">
  <div class="row"><button class="wide"><mk-icon name="addg"></mk-icon>Add Axial+Mom design group</button><button class="wide"><mk-icon name="addg"></mk-icon>Add Strut/Tie design group</button></div>
  <div class="cols"><div class="left">
  <div class="row nav"><button aria-label="Previous"><mk-icon name="bleft"></mk-icon></button><span>Group 1 of 3</span><button aria-label="Next"><mk-icon name="bright"></mk-icon></button><button class="cut" aria-label="Cut"><mk-icon name="cut"></mk-icon></button><label>Sort (reorder) Groups</label><spin-box></spin-box></div>
  <label class="cap" for="m">Members in this Group (graphically select/deselect)</label>
  <div class="edit"><div class="box"><textarea id="m">00005 00008 00006 00009</textarea><div class="bar"><mk-icon name="scrollup"></mk-icon><mk-icon name="scrolldown"></mk-icon></div></div>
  <div class="stack"><button aria-label="Delete"><mk-icon name="del"></mk-icon></button><button class="all"><mk-icon name="del"></mk-icon><b>ALL</b></button></div></div>
  <div class="row mode"><span>Selection Mode:</span><input type="radio" name="s" id="f" checked><label for="f">Find Group</label><input type="radio" name="s" id="e"><label for="e">Edit Group - Add/Remove Members</label></div>
  <div class="row ask"><span class="tick"><input type="checkbox" id="a" checked disabled><svg width="13" height="13"><path d="M3 6.500l3 3 5-5" fill="none" stroke="#fff" stroke-width="1.200"/></svg></span><label for="a">Do not prompt when adding and removing members from design groups</label></div>
  </div><div class="right"><label for="g">Generic lateral restraint type for section size auto design assumption</label>
  <div class="row"><div class="pick"><select id="g"><option>Has intermediate lateral restraint from side rails</option></select><mk-icon name="chevron"></mk-icon></div><spin-box></spin-box></div></div></div>
  </div><footer></footer>`);

define('mk-app', () => `<style>
  :host{display:flex;flex-direction:column;min-height:100vh}
  main{display:grid;grid-template-columns:625px 1fr;padding-top:3px}
  .rep{display:flex;padding-left:3px}
  design-report{flex:1}
  .scroll{width:16px;border-left:2px solid #fff;background:#f0f0f0;display:flex;justify-content:flex-end;box-sizing:border-box;margin-left:1px;padding-right:3px}
  .scroll i{width:2px;height:108px;margin-top:17px;background:#858585}
  frame-viewport{margin-left:11px}
  .low{padding-top:4px;display:flex;flex-direction:column;gap:3px}
  view-toolbars{padding-top:4px}
  </style>
  <title-bar></title-bar><menu-bar></menu-bar><ribbon-bar></ribbon-bar>
  <main><div class="rep"><design-report></design-report><div class="scroll"><i></i></div></div><frame-viewport></frame-viewport>
  <div class="low"><summary-box></summary-box><design-tabs></design-tabs></div><view-toolbars></view-toolbars></main>
  <group-panel></group-panel>`);
</script>
</body>
</html>
